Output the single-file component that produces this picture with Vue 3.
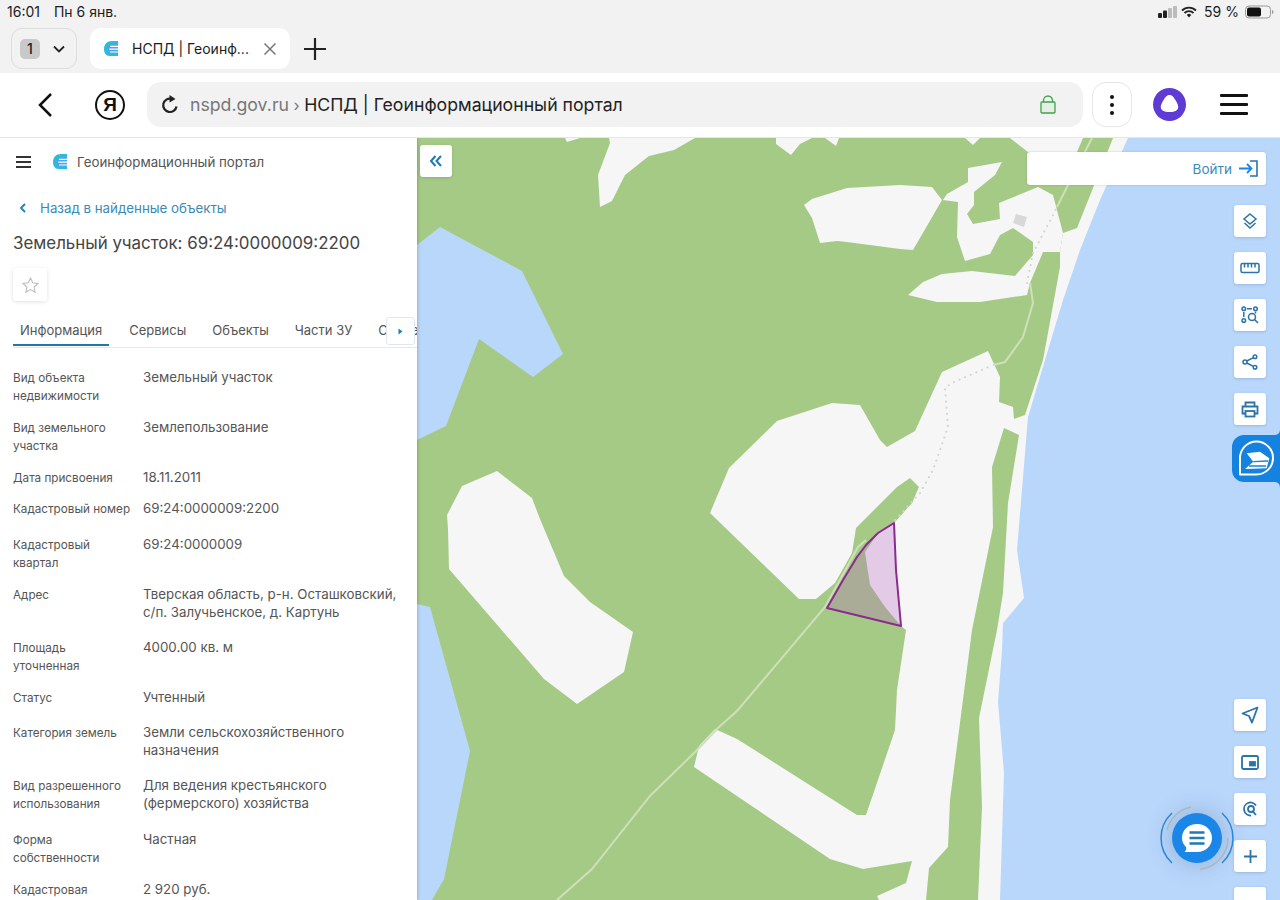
<script setup>
const rows = [
  { k: 'Вид объекта недвижимости', v: 'Земельный участок', h: 50 },
  { k: 'Вид земельного участка', v: 'Землепользование', h: 50 },
  { k: 'Дата присвоения', v: '18.11.2011', h: 31 },
  { k: 'Кадастровый номер', v: '69:24:0000009:2200', h: 36 },
  { k: 'Кадастровый квартал', v: '69:24:0000009', h: 50 },
  { k: 'Адрес', v: 'Тверская область, р-н. Осташковский, с/п. Залучьенское, д. Картунь', h: 53 },
  { k: 'Площадь уточненная', v: '4000.00 кв. м', h: 50 },
  { k: 'Статус', v: 'Учтенный', h: 35 },
  { k: 'Категория земель', v: 'Земли сельскохозяйственного назначения', h: 53 },
  { k: 'Вид разрешенного использования', v: 'Для ведения крестьянского (фермерского) хозяйства', h: 54 },
  { k: 'Форма собственности', v: 'Частная', h: 50 },
  { k: 'Кадастровая стоимость', v: '2 920 руб.', h: 50 },
]
const tabs = ['Информация', 'Сервисы', 'Объекты', 'Части ЗУ', 'Сведения']

const land = [
  '565,138 567,142 580,138',
  '609,138 610,143 598,175 600,207 612,201 625,175 649,156 674,150 695,138',
  '776,144 791,155 800,144 812,138 825,138 836,146 839,138 776,138',
  '965,138 973,145 980,138',
  '1010,138 1028,152 1077,152 1083,138',
  '804,205 812,199 847,188 900,185 932,187 942,200 913,250 900,249 847,242 837,241 820,243 812,218',
  '943,200 947,194 968,182 968,168 1002,162 995,175 974,192 974,205 967,214 973,224 1000,219 999,203 1038,187 1053,195 1063,233 1060,252 1043,252 1030,283 1027,295 980,302 937,302 908,295 923,282 942,274 972,271 1015,276 1033,255 1033,242 1013,228 1000,235 990,254 965,261 957,237 958,202',
  '447,515 462,486 497,471 532,498 540,519 564,576 590,602 633,632 624,672 577,704 544,679 449,569 448,529',
  '710,513 729,468 777,421 832,403 860,405 880,440 887,447 915,431 942,372 988,351 1000,377 999,402 1013,407 1014,419 1025,415 1043,360 1060,267 1060,252 1063,233 1077,228 1095,183 1113,138 1280,138 1280,900 879,900 877,896 906,883 912,861 863,869 830,859 694,767 699,746 715,729 737,739 857,815 866,815 895,730 897,690 906,630 901,626 885,607 870,585 865,552 878,533 895,522 912,503 919,487 910,478 897,487 856,528 852,553 835,583 816,599 799,599',
]
const forest = '1004,428 1019,435 1008,503 1003,593 997,630 979,718 982,807 978,900 926,900 929,868 948,847 950,800 972,630 993,527 992,467'
const water = [
  '417,245 440,227 522,271 563,354 533,377 479,339 446,426 417,440',
  '417,604 430,607 470,751 444,879 432,900 417,900',
  '1128,138 1100,200 1080,250 1063,300 1045,360 1028,417 1017,550 1024,598 1003,623 1002,650 998,702 1004,773 1002,837 1000,900 1280,900 1280,138',
]
</script>

<template>
  <div class="screen">
    <header class="chrome">
      <div class="status">
        <div class="status-left"><span>16:01</span><span>Пн 6 янв.</span></div>
        <div class="status-right">
          <svg class="signal" width="20" height="14" viewBox="0 0 20 14"><rect x="0" y="8" width="4" height="5" rx="1" fill="#222"/><rect x="5" y="5.500" width="4" height="7.500" rx="1" fill="#222"/><rect x="10" y="3" width="4" height="10" rx="1" fill="#bbb"/><rect x="15" y="1" width="4" height="12" rx="1" fill="#bbb"/></svg>
          <svg width="16" height="12" viewBox="0 0 16 12"><path d="M1 4.500a10 10 0 0 1 14 0M3.500 7a6.500 6.500 0 0 1 9 0" fill="none" stroke="#222" stroke-width="1.800"/><path d="M5.800 9a3 3 0 0 1 4.400 0L8 11.500z" fill="#222"/></svg>
          <span class="pct">59 %</span>
          <svg width="30" height="14" viewBox="0 0 30 14"><rect x="0.500" y="1" width="25" height="12" rx="3.500" fill="none" stroke="#999"/><rect x="2" y="2.500" width="14" height="9" rx="2" fill="#111"/><path d="M27 5v4a2 2 0 0 0 1.500-2A2 2 0 0 0 27 5z" fill="#999"/></svg>
        </div>
      </div>
      <div class="tabstrip">
        <div class="counter">
          <span class="count">1</span>
          <svg width="12" height="8" viewBox="0 0 12 8"><path d="M1 1.500l5 5 5-5" fill="none" stroke="#222" stroke-width="1.800"/></svg>
        </div>
        <div class="tab">
          <svg class="favicon" width="16" height="17" viewBox="0 0 16 17"><path d="M9 1C4 1 1 4.500 1 9c0 4 2 7 5.500 7H15V1z" fill="#27bfd8"/><path d="M9 3.500C6 3.500 3.500 6 3.500 9.500S5 14 7.500 14H15V3.500z" fill="#4aa8e6"/><path d="M7 6.300h8M6.300 9.200h8.700M7 12h8" stroke="#fff" stroke-width="1.200"/></svg>
          <span class="tab-title">НСПД | Геоинф...</span>
          <svg width="14" height="14" viewBox="0 0 14 14"><path d="M1.500 1.500l11 11M12.500 1.500l-11 11" stroke="#777" stroke-width="1.500"/></svg>
        </div>
        <svg class="plus" width="22" height="22" viewBox="0 0 22 22"><path d="M11 0v22M0 11h22" stroke="#222" stroke-width="2.200"/></svg>
      </div>
    </header>

    <nav class="addr">
      <svg class="back" width="16" height="26" viewBox="0 0 16 26"><path d="M14 2L3 13l11 11" fill="none" stroke="#111" stroke-width="2.500"/></svg>
      <span class="ya">Я</span>
      <div class="pill">
        <svg width="18" height="20" viewBox="0 0 18 20"><path d="M15.500 11.500a6.700 6.700 0 1 1-5-7.700" fill="none" stroke="#222" stroke-width="2.200"/><path d="M8.500 0l6 4-6 3.500z" fill="#222"/></svg>
        <span class="url"><span class="host">nspd.gov.ru</span><span class="sep"> › </span>НСПД | Геоинформационный портал</span>
        <svg class="lock" width="16" height="19" viewBox="0 0 16 19"><rect x="1" y="7" width="14" height="11" rx="1" fill="#d5ead3" fill-opacity=".5" stroke="#3fa34a" stroke-width="1.300"/><path d="M3.500 7V5.500a4.500 4.500 0 0 1 9 0V7" fill="none" stroke="#3fa34a" stroke-width="1.300"/></svg>
      </div>
      <div class="dots"><i></i><i></i><i></i></div>
      <svg class="alice" width="33" height="33" viewBox="0 0 33 33"><circle cx="16.500" cy="16.500" r="16.500" fill="#5f3bd6"/><path d="M16.500 7c3 0 4.500 2.500 6.200 5.500 1.600 2.900 3.300 5.500 2.200 8.200-1.100 2.500-5 3.300-8.400 3.300s-7.300-.8-8.400-3.300c-1.100-2.700.6-5.300 2.200-8.200C12 9.500 13.500 7 16.500 7z" fill="#fff"/></svg>
      <div class="burger"><i></i><i></i><i></i></div>
    </nav>

    <main class="body">
      <aside class="panel">
        <div class="brand">
          <div class="menu"><i></i><i></i><i></i></div>
          <svg width="16" height="17" viewBox="0 0 16 17"><path d="M9 1C4 1 1 4.500 1 9c0 4 2 7 5.500 7H15V1z" fill="#27bfd8"/><path d="M9 3.500C6 3.500 3.500 6 3.500 9.500S5 14 7.500 14H15V3.500z" fill="#4aa8e6"/><path d="M7 6.300h8M6.300 9.200h8.700M7 12h8" stroke="#fff" stroke-width="1.200"/></svg>
          <span>Геоинформационный портал</span>
        </div>
        <a class="backlink">
          <svg width="7" height="10" viewBox="0 0 7 10"><path d="M6 1L2 5l4 4" fill="none" stroke="#1f7fb0" stroke-width="1.800"/></svg>
          <span>Назад в найденные объекты</span>
        </a>
        <h1 class="title">Земельный участок: 69:24:0000009:2200</h1>
        <div class="fav">
          <svg width="17" height="16" viewBox="0 0 17 16"><path d="M8.500 1l2.200 4.800 5.300.6-3.900 3.600 1 5.200-4.600-2.600-4.600 2.600 1-5.200L1 6.400l5.300-.6z" fill="none" stroke="#bdbdbd" stroke-width="1.100"/></svg>
        </div>
        <div class="tabs">
          <span v-for="(t, i) in tabs" :key="t" class="tabitem" :class="{ active: i === 0 }">{{ t }}</span>
          <span class="more"><svg width="5" height="7" viewBox="0 0 5 7"><path d="M0.500 0.500l4 3-4 3z" fill="#1f7fb0"/></svg></span>
        </div>
        <dl class="props">
          <div v-for="r in rows" :key="r.k" class="prop" :style="{ height: r.h + 'px' }">
            <dt>{{ r.k }}</dt>
            <dd>{{ r.v }}</dd>
          </div>
        </dl>
      </aside>

      <section class="map">
        <svg class="canvas" viewBox="417 138 863 762" preserveAspectRatio="none">
          <rect x="417" y="138" width="863" height="762" fill="#a5ca85"/>
          <polygon v-for="p in land" :key="p" :points="p" fill="#f6f6f7"/>
          <polygon :points="forest" fill="#a5ca85"/>
          <polygon v-for="p in water" :key="p" :points="p" fill="#b9d7fb"/>
          <polygon points="1016,214 1027,217 1024,227 1013,223" fill="#d8d8d8"/>
          <polyline points="557,900 592,869 650,796 695,752 719,727 737,711 825,607 858,547 866,540" fill="none" stroke="#cde0ba" stroke-width="2"/>
          <polyline points="993,365 1005,362 1023,337 1033,303 1030,283" fill="none" stroke="#cde0ba" stroke-width="2"/>
          <polyline points="1057,207 1067,187 1092,138" fill="none" stroke="#cde0ba" stroke-width="2"/>
          <polyline points="895,520 920,493 933,470 948,427 945,388 952,383 993,365" fill="none" stroke="#d2d2d8" stroke-width="2" stroke-linecap="round" stroke-dasharray="0.100 6"/>
          <polyline points="1027,283 1033,253 1053,215 1057,207" fill="none" stroke="#d2d2d8" stroke-width="2" stroke-linecap="round" stroke-dasharray="0.100 6"/>
          <polygon points="827,608 843,580 857,557 866,545 878,533 894,523 896,570 901,626" fill="#b667c4" fill-opacity=".3" stroke="#8b2a8f" stroke-width="2" stroke-linejoin="round"/>
        </svg>

        <button class="ctl collapse">
          <svg width="14" height="12" viewBox="0 0 14 12"><path d="M6.500 1L2 6l4.500 5M12 1L7.500 6l4.500 5" fill="none" stroke="#1f78b0" stroke-width="2"/></svg>
        </button>

        <div class="login">
          <span>Войти</span>
          <svg width="19" height="17" viewBox="0 0 19 17"><path d="M11 1h7v15h-7" fill="none" stroke="#2b73a8" stroke-width="1.600"/><path d="M0 8.500h12M8 4l4.500 4.500L8 13" fill="none" stroke="#1a86e8" stroke-width="1.800"/></svg>
        </div>

        <div class="tools top">
          <button class="ctl"><svg width="18" height="18" viewBox="0 0 18 18" class="ico"><path d="M9 2l6 5-6 5-6-5z"/><path d="M3.500 11L9 16l5.500-5"/></svg></button>
          <button class="ctl"><svg width="20" height="12" viewBox="0 0 20 12" class="ico"><rect x="1" y="1.500" width="18" height="9" rx="1.500"/><path d="M4.500 1.500v4M8 1.500v4M11.500 1.500v4M15 1.500v4"/></svg></button>
          <button class="ctl"><svg width="18" height="18" viewBox="0 0 18 18" class="ico"><circle cx="2.800" cy="2.800" r="1.800"/><circle cx="14.500" cy="2.800" r="1.800"/><circle cx="2.800" cy="14.500" r="1.800"/><circle cx="11" cy="11" r="3.500"/><path d="M6 2.800h5M2.800 6v5M13.500 13.500l3.500 3.500M14.500 5.500v2"/></svg></button>
          <button class="ctl"><svg width="16" height="16" viewBox="0 0 16 16" class="ico"><circle cx="3" cy="8" r="2"/><circle cx="13" cy="2.800" r="1.800"/><circle cx="13" cy="13.200" r="1.800"/><path d="M4.800 7l6.600-3.400M4.800 9l6.600 3.400"/></svg></button>
          <button class="ctl"><svg width="18" height="17" viewBox="0 0 18 17" class="ico thick"><path d="M4.500 5V1.500h9V5M4.500 12.500H1.500V5.500h15v7h-3"/><rect x="4.500" y="10" width="9" height="5.500"/></svg></button>
        </div>

        <button class="landmark">
          <svg width="48" height="59" viewBox="0 0 48 59">
            <path d="M48 0c0 6-4 6-8 6H12A12 12 0 0 0 0 18v23a12 12 0 0 0 12 12h28c4 0 8 0 8 6z" fill="#1582e0"/>
            <path d="M8 45.500V29a16.500 16.500 0 1 1 16.500 16.500z" fill="none" stroke="#fff" stroke-width="2" stroke-linejoin="round"/>
            <path d="M14.700 24.300L28 22.700l9.300 6.600-2.600 10L13 40l8.300-7.300z" fill="#fff"/>
            <path d="M21.300 32.700L36 32M17 37h17" stroke="#1582e0" stroke-width="1.300" fill="none"/>
          </svg>
        </button>

        <div class="tools bottom">
          <button class="ctl"><svg width="18" height="18" viewBox="0 0 18 18" class="ico thick"><path d="M16.500 1.500L1.500 7.500l6.500 2.500 3 6.500z" stroke-linejoin="round"/></svg></button>
          <button class="ctl"><svg width="18" height="15" viewBox="0 0 18 15" class="ico thick"><rect x="1" y="1" width="16" height="13" rx="1.500"/><rect x="9" y="7" width="5" height="3.500" fill="#2b73a8"/></svg></button>
          <button class="ctl"><svg width="16" height="16" viewBox="0 0 16 16" class="ico thick"><path d="M14 4.500A6.500 6.500 0 1 0 9 14.500"/><circle cx="9" cy="8" r="3"/><path d="M11 10.500l3 3.500"/></svg></button>
          <button class="ctl"><svg width="13" height="13" viewBox="0 0 13 13" class="ico thick"><path d="M6.500 0v13M0 6.500h13"/></svg></button>
          <button class="ctl"></button>
        </div>

        <div class="chat">
          <div class="fab">
            <svg width="32" height="31" viewBox="0 0 32 31"><path d="M16 1c8.500 0 15 6 15 14s-6.500 14-15 14H3.500c1.800-1.500 2-3 1.500-5C2.500 21.500 1 18.500 1 15 1 7 7.500 1 16 1z" fill="#fff"/><path d="M8.500 9.500h15M8.500 15h15M8.500 20.500h15" stroke="#1f78b8" stroke-width="2.400"/></svg>
          </div>
          <svg class="rings" width="84" height="70" viewBox="0 0 84 70">
            <path d="M17 10A34 34 0 0 0 17 60M67 10A34 34 0 0 1 67 60" fill="none" stroke="#2c86d8" stroke-width="1.500"/>
            <path d="M12 27A31 31 0 0 1 36 4M73 35A31 31 0 0 1 45 66" fill="none" stroke="#aeb6be" stroke-width="1.500"/>
          </svg>
        </div>
      </section>
    </main>
  </div>
</template>

<style>
html, body { margin: 0; background: #fff; }
</style>

<style scoped>
.screen { width: 1280px; height: 900px; overflow: hidden; display: flex; flex-direction: column; font-family: Inter, "Noto Sans", sans-serif; color: #444; background: #fff; }
.chrome { height: 73px; background: #f2f2f2; flex: none; box-sizing: border-box; padding: 0 5px 0 11px; }
.status { height: 28px; display: flex; justify-content: space-between; align-items: flex-start; margin-left: -4px; padding-top: 3px; box-sizing: border-box; color: #1c1c1c; font-size: 14px; line-height: 17px; }
.status-left { display: flex; gap: 14px; }
.status-right { display: flex; align-items: center; gap: 6px; height: 17px; }
.signal { margin-right: -3px; }
.pct { margin-right: 0; margin-left: 1px; }
.tabstrip { display: flex; align-items: center; height: 41px; }
.counter { width: 66px; height: 41px; box-sizing: border-box; border: 1px solid #dcdcdc; border-radius: 11px; display: flex; align-items: center; padding-left: 8px; gap: 13px; }
.count { width: 20px; height: 20px; background: #c9c9c9; border-radius: 5px; font-size: 14px; font-weight: 500; line-height: 20px; text-align: center; color: #222; }
.tab { margin-left: 13px; width: 200px; height: 41px; box-sizing: border-box; background: #fff; border-radius: 11px; display: flex; align-items: center; padding: 0 13px; color: #1c1c1c; }
.favicon { margin-right: 13px; }
.tab-title { flex: 1; font-size: 14px; white-space: nowrap; }
.plus { margin-left: 14px; }

.addr { height: 65px; flex: none; box-sizing: border-box; border-bottom: 1px solid #e6e6e6; display: flex; align-items: center; padding: 0 32px 1px 37px; background: #fff; position: relative; z-index: 3; }
.back { flex: none; }
.ya { margin-left: 42px; width: 30px; height: 30px; box-sizing: border-box; border: 2.500px solid #111; border-radius: 50%; font-size: 19px; font-weight: 700; line-height: 25px; text-align: center; color: #111; font-family: "Liberation Sans", sans-serif; }
.pill { margin-left: 22px; width: 937px; height: 45px; box-sizing: border-box; background: #f2f2f2; border-radius: 14px; display: flex; align-items: center; padding: 0 27px 0 14px; }
.url { margin-left: 11px; flex: 1; font-size: 17.700px; color: #222; white-space: nowrap; }
.host { color: #777; }
.sep { color: #777; font-size: 16px; }
.dots { margin-left: 9px; width: 40px; height: 45px; box-sizing: border-box; border: 1px solid #e6e6e6; border-radius: 14px; display: flex; flex-direction: column; align-items: center; justify-content: center; gap: 4px; }
.dots i { width: 4px; height: 4px; background: #111; border-radius: 50%; }
.alice { margin-left: 21px; flex: none; }
.burger { margin-left: 34px; width: 28px; display: flex; flex-direction: column; gap: 6px; }
.burger i { height: 3px; background: #111; border-radius: 1px; }

.body { flex: 1; display: flex; min-height: 0; }
.panel { width: 417px; flex: none; box-sizing: border-box; padding: 0 0 0 13px; background: #fff; position: relative; z-index: 2; box-shadow: 1px 0 3px rgba(0, 0, 0, .18); overflow: hidden; }
.brand { height: 47px; display: flex; align-items: center; font-size: 13.300px; color: #555; }
.menu { margin-left: 3px; width: 15px; display: flex; flex-direction: column; gap: 3px; margin-right: 21px; }
.menu i { height: 2px; background: #333; }
.brand span { margin-left: 9px; }
.backlink { display: flex; align-items: center; margin-top: 14px; height: 18px; font-size: 13.300px; color: #3b8ab5; }
.backlink svg { margin-left: 6px; margin-right: 14px; }
.title { margin: 14px 0 0; font-size: 16.900px; font-weight: 400; line-height: 24px; color: #444; white-space: nowrap; }
.fav { margin-top: 13px; width: 34px; height: 33px; display: flex; align-items: center; justify-content: center; border-radius: 3px; background: #fff; box-shadow: 0 1px 4px rgba(0, 0, 0, .12); }
.tabs { margin: 16px 0 0; height: 30px; display: flex; gap: 12px; border-bottom: 1px solid #e8e8e8; position: relative; overflow: hidden; align-items: flex-start; }
.tabitem { padding: 0 7px; height: 29px; line-height: 26px; font-size: 13px; color: #555; white-space: nowrap; flex: none; box-sizing: content-box; }
.tabitem.active { border-bottom: 2px solid #1f78a8; height: 27px; margin-right: 1px; }
.more { position: absolute; left: 373px; top: 0; width: 27px; height: 26px; background: #fff; border: 1px solid #dfe8ee; border-radius: 3px; display: flex; align-items: center; justify-content: center; }
.props { margin: 21px 0 0; }
.prop { display: grid; grid-template-columns: 130px 256px; align-items: start; }
dt { font-size: 11.700px; line-height: 18px; color: #555; padding-right: 8px; }
dd { margin: 0; font-size: 13.300px; line-height: 18px; color: #555; margin-top: -1px; }

.map { flex: 1; position: relative; overflow: hidden; }
.canvas { display: block; width: 100%; height: 100%; }
.ctl { width: 32px; height: 32px; padding: 0; border: 0; background: #fff; border-radius: 3px; box-shadow: 0 1px 3px rgba(60, 90, 120, .25); display: flex; align-items: center; justify-content: center; }
.ico { fill: none; stroke: #2b73a8; stroke-width: 1.500; }
.ico.thick { stroke-width: 1.800; }
.collapse { position: absolute; left: 3px; top: 7px; }
.login { position: absolute; left: 610px; top: 14px; width: 239px; height: 33px; box-sizing: border-box; background: #fff; border-radius: 3px; display: flex; align-items: center; justify-content: flex-end; padding-right: 8px; gap: 7px; font-size: 13.500px; color: #3d8ab8; box-shadow: 0 0 2px rgba(60, 90, 120, .3); }
.tools { position: absolute; left: 817px; display: flex; flex-direction: column; gap: 15px; }
.tools.top { top: 67px; }
.tools.bottom { top: 561px; }
.landmark { position: absolute; right: 0; top: 291px; width: 48px; height: 59px; padding: 0; border: 0; background: none; }
.landmark svg { display: block; }
.chat { position: absolute; left: 738px; top: 665px; width: 84px; height: 70px; display: flex; align-items: center; justify-content: center; }
.rings { position: absolute; inset: 0; overflow: visible; }
.fab { width: 50px; height: 50px; border-radius: 50%; background: #1a86e8; display: flex; align-items: center; justify-content: center; box-shadow: 0 0 26px rgba(40, 70, 110, .3); }
</style>
